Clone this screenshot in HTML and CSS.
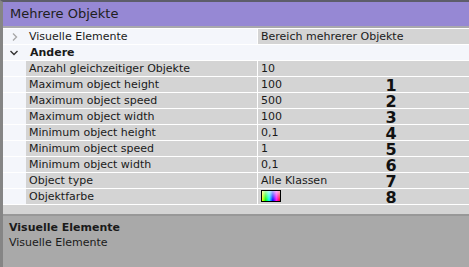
FILE: index.html
```html
<!DOCTYPE html>
<html>
<head>
  <title>Mehrere Objekte</title>
  <link rel="stylesheet" href="styles.css">
</head>
<body>
  <div class="panel">
    <div class="panel-title">Mehrere Objekte</div>

    <div class="props">
      <div class="row category">
        <span class="toggle">
          <svg width="6" height="8" viewBox="0 0 6 8"><path d="M1 0.5 L4.5 4 L1 7.5" fill="none" stroke="#a8a8a8" stroke-width="1.4"/></svg>
        </span>
        <span class="name">Visuelle Elemente</span>
        <span class="value">Bereich mehrerer Objekte</span>
      </div>

      <div class="row group">
        <span class="toggle">
          <svg width="8" height="6" viewBox="0 0 8 6"><path d="M0.5 1 L4 4.5 L7.5 1" fill="none" stroke="#333" stroke-width="1.4"/></svg>
        </span>
        <span class="name">Andere</span>
      </div>

      <div class="row">
        <span class="toggle"></span>
        <span class="name">Anzahl gleichzeitiger Objekte</span>
        <span class="value"><span class="val">10</span></span>
      </div>
      <div class="row">
        <span class="toggle"></span>
        <span class="name">Maximum object height</span>
        <span class="value"><span class="val">100</span><span class="num">1</span></span>
      </div>
      <div class="row">
        <span class="toggle"></span>
        <span class="name">Maximum object speed</span>
        <span class="value"><span class="val">500</span><span class="num">2</span></span>
      </div>
      <div class="row">
        <span class="toggle"></span>
        <span class="name">Maximum object width</span>
        <span class="value"><span class="val">100</span><span class="num">3</span></span>
      </div>
      <div class="row">
        <span class="toggle"></span>
        <span class="name">Minimum object height</span>
        <span class="value"><span class="val">0,1</span><span class="num">4</span></span>
      </div>
      <div class="row">
        <span class="toggle"></span>
        <span class="name">Minimum object speed</span>
        <span class="value"><span class="val">1</span><span class="num">5</span></span>
      </div>
      <div class="row">
        <span class="toggle"></span>
        <span class="name">Minimum object width</span>
        <span class="value"><span class="val">0,1</span><span class="num">6</span></span>
      </div>
      <div class="row">
        <span class="toggle"></span>
        <span class="name">Object type</span>
        <span class="value"><span class="val">Alle Klassen</span><span class="num">7</span></span>
      </div>
      <div class="row">
        <span class="toggle"></span>
        <span class="name">Objektfarbe</span>
        <span class="value"><span class="val"><span class="swatch"></span></span><span class="num">8</span></span>
      </div>
    </div>

    <div class="filler"></div>

    <div class="desc">
      <div class="desc-title">Visuelle Elemente</div>
      <div class="desc-text">Visuelle Elemente</div>
    </div>
  </div>
</body>
</html>
```

FILE: styles.css
```css
html, body {
  height: 100%;
}

body {
  margin: 0;
  font-family: "DejaVu Sans", Verdana, sans-serif;
  font-size: 11px;
  color: #1a1a1a;
  overflow: hidden;
}

.panel {
  height: 100%;
  box-sizing: border-box;
  display: flex;
  flex-direction: column;
  border-left: 3px solid #858585;
  border-top: 2px solid #5d5d6a;
  background-color: #f4f6fb;
}

.panel-title {
  height: 24px;
  line-height: 23px;
  padding-left: 7px;
  background-color: #9688d4;
  border-bottom: 2px solid #a9a9ad;
  font-size: 13px;
  color: #202020;
}

.props {
  border-bottom: 1px solid #fff;
}

.row {
  display: grid;
  grid-template-columns: 23px 232px 1fr;
  height: 15px;
  line-height: 15px;
  border-top: 1px solid #fff;
  background-color: #f4f6fb;
}

.toggle {
  display: flex;
  align-items: center;
}

.category .toggle {
  padding-left: 9px;
}

.group .toggle {
  padding-left: 7px;
}

.name {
  box-sizing: border-box;
  padding-left: 3px;
  border-right: 1px solid #fff;
  background-color: #d4d4d4;
  white-space: nowrap;
}

.value {
  display: flex;
  padding-left: 3px;
  background-color: #d4d4d4;
  white-space: nowrap;
}

.category .name {
  background-color: #f4f6fb;
}

.group .name {
  grid-column: 2 / -1;
  padding-left: 4px;
  border-right: none;
  background-color: #f4f6fb;
  font-weight: bold;
}

.val {
  width: 120px;
}

.num {
  width: 20px;
  text-align: center;
  font-size: 16px;
  font-weight: bold;
  color: #111;
  line-height: 15px;
  position: relative;
  top: 1px;
}

.swatch {
  display: inline-block;
  vertical-align: top;
  margin-top: 1px;
  width: 18px;
  height: 10px;
  border: 1px solid #000;
  background:
    linear-gradient(to bottom, rgba(255, 255, 255, 0.7), rgba(255, 255, 255, 0)),
    linear-gradient(to right, #ffff00, #00ff00, #00ffff, #0000ff, #ff00ff, #ff0000);
}

.filler {
  height: 9px;
  background-color: #d4d4d4;
}

.desc {
  flex: 1;
  padding: 4px 6px;
  background-color: #a9a9a9;
  border-top: 2px solid #989898;
  line-height: 15px;
}

.desc-title {
  font-weight: bold;
}
```
